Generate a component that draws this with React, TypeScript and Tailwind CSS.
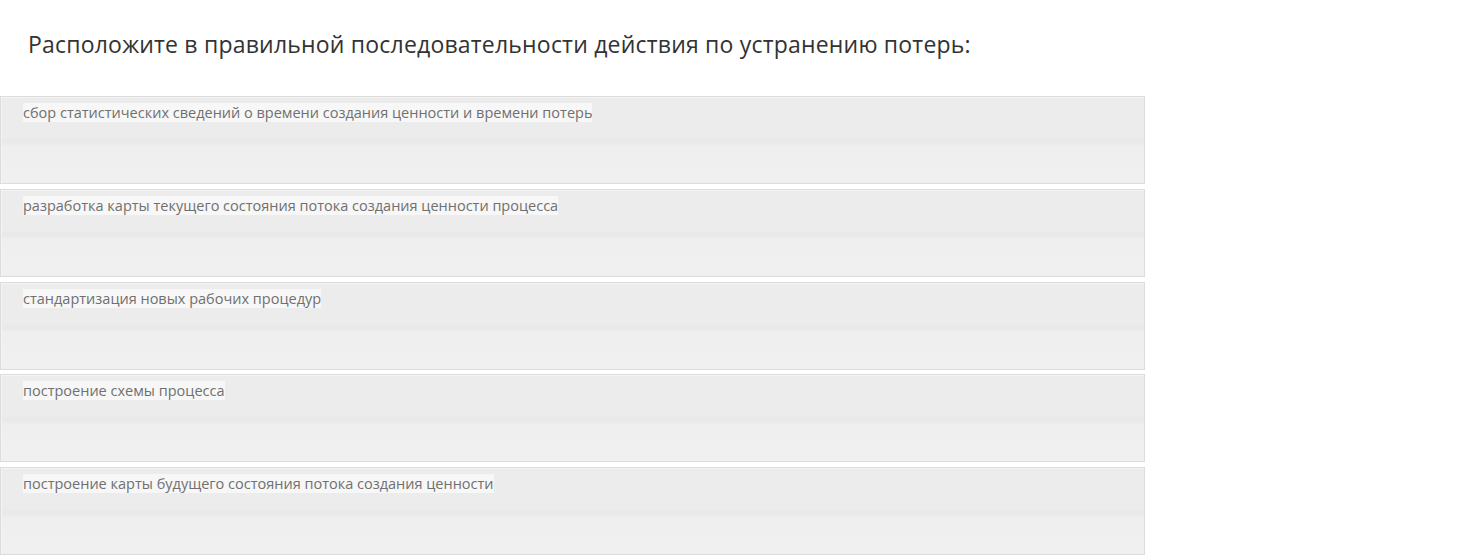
import React from 'react';

const steps = [
  'сбор статистических сведений о времени создания ценности и времени потерь',
  'разработка карты текущего состояния потока создания ценности процесса',
  'стандартизация новых рабочих процедур',
  'построение схемы процесса',
  'построение карты будущего состояния потока создания ценности',
];

export default function App() {
  return (
    <div className="min-h-[557px] bg-white font-['Open_Sans',sans-serif]">
      <h2 className="pl-[28px] pt-[28px] text-[23px] leading-[32px] tracking-[0.2px] text-[#333]">
        Расположите в правильной последовательности действия по устранению потерь:
      </h2>
      <ul className="mt-[36px] flex w-[1145px] flex-col gap-[4.75px]">
        {steps.map((s) => (
          <li
            key={s}
            className="h-[88px] border border-[#dcdcdc] bg-[linear-gradient(to_bottom,#ececec_0%,#ececec_46%,#e8e8e8_52%,#efefef_58%,#f0f0f0_100%)] pl-[22px] pt-[3px] shadow-[inset_1px_1px_0_#f4f4f4]"
          >
            <span className="bg-[#f7f7f7] text-[14.5px] leading-[19px] text-[#707070]">{s}</span>
          </li>
        ))}
      </ul>
    </div>
  );
}
